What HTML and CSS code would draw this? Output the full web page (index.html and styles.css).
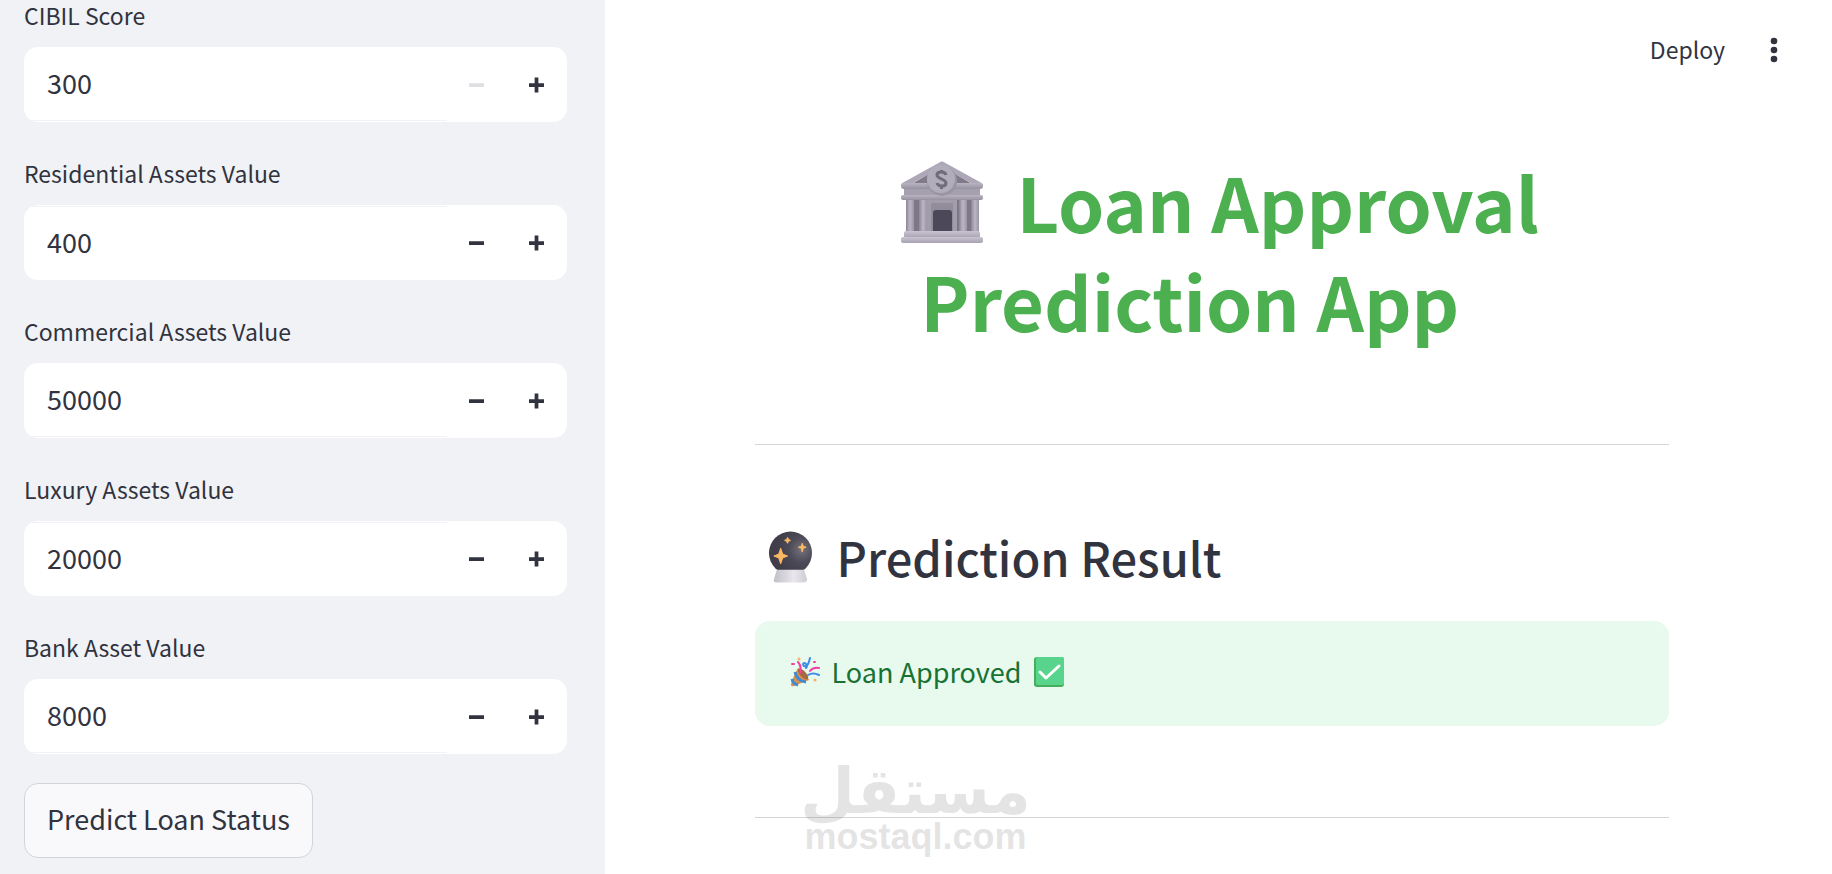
FILE: index.html
```html
<!DOCTYPE html>
<html lang="en">
<head>
<meta charset="utf-8">
<title>Loan Approval Prediction App</title>
<link rel="stylesheet" href="styles.css">
</head>
<body>
<div class="app">
  <aside class="sidebar">
    <form class="form">
      <div class="field">
        <label for="cibil">CIBIL Score</label>
        <div class="number"><input id="cibil" type="text" inputmode="numeric" value="300"><button type="button" aria-label="Decrease" disabled><svg viewBox="0 0 16 18"><path d="M0 9h16"/></svg></button><button type="button" aria-label="Increase"><svg viewBox="0 0 16 18"><path d="M0 9h16M8 1v16"/></svg></button></div>
      </div>
      <div class="field">
        <label for="residential">Residential Assets Value</label>
        <div class="number"><input id="residential" type="text" inputmode="numeric" value="400"><button type="button" aria-label="Decrease"><svg viewBox="0 0 16 18"><path d="M0 9h16"/></svg></button><button type="button" aria-label="Increase"><svg viewBox="0 0 16 18"><path d="M0 9h16M8 1v16"/></svg></button></div>
      </div>
      <div class="field">
        <label for="commercial">Commercial Assets Value</label>
        <div class="number"><input id="commercial" type="text" inputmode="numeric" value="50000"><button type="button" aria-label="Decrease"><svg viewBox="0 0 16 18"><path d="M0 9h16"/></svg></button><button type="button" aria-label="Increase"><svg viewBox="0 0 16 18"><path d="M0 9h16M8 1v16"/></svg></button></div>
      </div>
      <div class="field">
        <label for="luxury">Luxury Assets Value</label>
        <div class="number"><input id="luxury" type="text" inputmode="numeric" value="20000"><button type="button" aria-label="Decrease"><svg viewBox="0 0 16 18"><path d="M0 9h16"/></svg></button><button type="button" aria-label="Increase"><svg viewBox="0 0 16 18"><path d="M0 9h16M8 1v16"/></svg></button></div>
      </div>
      <div class="field">
        <label for="bank">Bank Asset Value</label>
        <div class="number"><input id="bank" type="text" inputmode="numeric" value="8000"><button type="button" aria-label="Decrease"><svg viewBox="0 0 16 18"><path d="M0 9h16"/></svg></button><button type="button" aria-label="Increase"><svg viewBox="0 0 16 18"><path d="M0 9h16M8 1v16"/></svg></button></div>
      </div>
    </form>
    <button class="predict" type="button">Predict Loan Status</button>
  </aside>

  <main class="main">
    <header class="toolbar">
      <button class="deploy" type="button">Deploy</button>
      <button class="menu" type="button" aria-label="Main menu">
        <svg viewBox="0 0 8 26"><circle cx="4" cy="4" r="3.3"/><circle cx="4" cy="13" r="3.3"/><circle cx="4" cy="22" r="3.3"/></svg>
      </button>
    </header>

    <div class="content">
      <h1 class="title"><svg class="bank" viewBox="0 0 84 82" aria-hidden="true">
          <defs>
            <linearGradient id="stone" x1="0" y1="0" x2="0" y2="1"><stop offset="0" stop-color="#b9b4c2"/><stop offset="1" stop-color="#96909f"/></linearGradient>
            <linearGradient id="pillar" x1="0" y1="0" x2="1" y2="0"><stop offset="0" stop-color="#8b8597"/><stop offset=".5" stop-color="#bcb7c6"/><stop offset="1" stop-color="#9a94a4"/></linearGradient>
            <linearGradient id="step" x1="0" y1="0" x2="0" y2="1"><stop offset="0" stop-color="#c9c4d0"/><stop offset="1" stop-color="#a8a2b1"/></linearGradient>
          </defs>
          <path d="M6 38h72v34H6z" fill="#7d778a"/>
          <path d="M27 38h30v34H27z" fill="#a29dab"/>
          <path d="M31 42h22v30H31z" fill="#928c9b"/>
          <path d="M33 72V52q0-3 3-3h13q3 0 3 3v20z" fill="#4d4859"/>
          <g fill="url(#pillar)"><path d="M6 38h8v34H6z"/><path d="M19 38h8v34h-8z"/><path d="M59 38h8v34h-8z"/><path d="M71 38h8v34h-8z"/></g>
          <path d="M10 24 42 5l32 19z" fill="#807b89"/>
          <path d="M4 24 42 3l38 21" fill="none" stroke="#ada7b7" stroke-width="5" stroke-linejoin="round" stroke-linecap="round"/>
          <path d="M4 27h76v10H4z" fill="#a5a0ae"/>
          <rect x="1" y="22" width="82" height="6" rx="3" fill="url(#stone)"/>
          <rect x="1" y="34" width="82" height="5" rx="2" fill="url(#stone)"/>
          <rect x="4" y="70" width="76" height="7" rx="2" fill="url(#step)"/>
          <rect x="1" y="76" width="82" height="6" rx="2" fill="url(#step)"/>
          <circle cx="42" cy="20" r="15" fill="#9a95a3"/><circle cx="41" cy="18" r="14" fill="#b2adba"/>
          <path d="M46 14c-1-4-9-4-9 0s9 4 9 8-8 4-9 0M41.500 9v3M41.500 25v3" fill="none" stroke="#716c7b" stroke-width="3"/>
        </svg>Loan Approval<br>Prediction App<span class="anchor"></span></h1>
      <hr>
      <h2 class="subtitle"><svg class="ball" viewBox="0 0 46 52" aria-hidden="true">
          <defs>
            <radialGradient id="glass" cx=".76" cy=".42" r=".6"><stop offset="0" stop-color="#74727b"/><stop offset=".5" stop-color="#4c4a57"/><stop offset="1" stop-color="#413d4b"/></radialGradient>
            <linearGradient id="base" x1="0" y1="0" x2="1" y2="0"><stop offset="0" stop-color="#c2bfc8"/><stop offset=".6" stop-color="#e9e7ed"/><stop offset="1" stop-color="#cfccd4"/></linearGradient>
          </defs>
          <circle cx="23" cy="22" r="22" fill="url(#glass)"/>
          <path d="M9 39h28l3 10q0 3-4 3H9q-4 0-3-3z" fill="url(#base)"/>
          <g fill="#fbb862"><path d="m13 17 2 6 5 2-5 2-2 6-2-6-5-2 5-2zM20 6l1 2 2 1-2 1-1 2-1-2-2-1 2-1zM35 12l1 3 3 1-3 1-1 4-1-4-3-1 3-1z" stroke="#fbb862" stroke-linejoin="round"/></g>
        </svg>Prediction Result</h2>
      <div class="alert" role="status">
        <svg class="party" viewBox="0 0 30 30" aria-hidden="true">
          <path d="M8 11Q1 24 1 28q0 2 3 1l15-6Q16 15 8 11z" fill="#da914b"/>
          <path d="M5 15q2 9 11 10M2 22q1 5 6 6" fill="none" stroke="#3e8ad8" stroke-width="3"/>
          <ellipse cx="13" cy="17" rx="3" ry="7" transform="rotate(-42 13 17)" fill="#a56a3e"/>
          <g fill="none" stroke-width="2" stroke-linecap="round"><path d="M8 5q4 4 2 11M20 14q3-4 9-3M2 7h2M24 5h1" stroke="#f43fa0"/><path d="M20 1q-1 5-3 8-4 1-4-2 1-2 3 0 2 2 0 4M18 18q5-3 11 0" stroke="#3e8ee4"/></g>
          <g fill="#f5b568"><circle cx="9" cy="2" r="1.600"/><circle cx="25" cy="23" r="1.600"/></g>
        </svg>
        <span>Loan Approved</span>
        <svg class="check" viewBox="0 0 30 30" aria-hidden="true">
          <rect width="30" height="30" rx="3" fill="#45ae5b"/><rect x="2" width="28" height="28" rx="2" fill="#59d48d"/>
          <path d="m6 15 6 6L25 9" fill="none" stroke="#fff" stroke-width="3" stroke-linecap="round" stroke-linejoin="round"/>
        </svg>
      </div>
      <div class="footer"><hr>
        <div class="watermark"><span class="arabic" lang="ar" dir="rtl">مستقل</span><span class="latin">mostaql.com</span></div>
      </div>
    </div>
  </main>
</div>
</body>
</html>
```
FILE: styles.css
```css
* { box-sizing: border-box; }
body {
  margin: 0;
  color: #31333f;
  background: #fff;
  font-family: "Noto Sans CJK SC", "Noto Sans", sans-serif;
}
button, input { font: inherit; color: inherit; border: 0; margin: 0; padding: 0; background: none; }
h1, h2 { margin: 0; }
svg { flex: none; }

.app { display: flex; height: 100vh; overflow: hidden; }

.sidebar { width: 33%; padding: 0 38px 0 24px; background: #f0f2f6; }
.form { display: flex; flex-direction: column; gap: 36px; margin-bottom: 29px; }
.field { display: flex; flex-direction: column; gap: 16px; }
.field label { font-size: 23px; line-height: 31px; }
.number { display: flex; height: 75px; padding: 1px 0; border-radius: 14px; background: #fff; overflow: hidden; }
.number input { flex: 1; min-width: 0; padding: 0 23px 3px; font-size: 27px; border: 0 solid #f0f2f6; outline: 0; }
.field:nth-child(odd) input { border-bottom-width: 1px; }
.field:nth-child(even) input { border-top-width: 1px; }
.number button { width: 60px; display: grid; place-items: center; }
.number svg { width: 15px; height: 18px; fill: none; stroke: #31333f; stroke-width: 4; }
.number button:disabled svg { stroke: #dfdfe4; }
.predict { height: 75px; padding: 0 22px 4px; font-size: 27px; border: 1px solid #d3d4da; border-radius: 14px; background: #f9f9fb; }

.main { flex: 1; min-width: 0; }
.toolbar { display: flex; justify-content: flex-end; align-items: center; gap: 45px; height: 100px; padding-right: 54px; }
.deploy { padding-bottom: 2px; font-size: 23px; line-height: 36px; }
.menu { display: flex; }
.menu svg { width: 8px; height: 26px; fill: #31333f; }

.content { padding: 51px 163px 0 150px; }
.title { color: #4caf50; font-size: 74px; line-height: 99px; font-weight: 700; text-align: center; }
.bank { width: 84px; height: 82px; margin: 0 32px 0 16px; vertical-align: -10px; }
.anchor { display: inline-block; width: 44px; }
hr { margin: 0; border: 0; border-top: 1px solid #d6d6da; }
.title + hr { margin-top: 95px; }
.subtitle { display: flex; align-items: center; gap: 24px; margin-top: 79px; padding-left: 13px; font-size: 47px; line-height: 66px; font-weight: 500; }
.ball { width: 45px; height: 52px; }
.alert { display: flex; align-items: center; gap: 12px; height: 105px; margin-top: 31px; padding: 0 35px 4px; border-radius: 15px; background: #e8f9ee; color: #177233; font-size: 27px; }
.party, .check { width: 30px; height: 30px; }
.footer { position: relative; margin-top: 91px; }
.watermark {
  position: absolute; top: -55px; left: 50px; width: 222px;
  display: flex; flex-direction: column; align-items: center;
  color: #000; opacity: .1; font-weight: 700; white-space: nowrap;
}
.arabic { font-family: "DejaVu Sans", sans-serif; font-size: 63px; line-height: 60px; }
.latin { font-family: "Liberation Sans", sans-serif; font-size: 36px; line-height: 30px; }
```
